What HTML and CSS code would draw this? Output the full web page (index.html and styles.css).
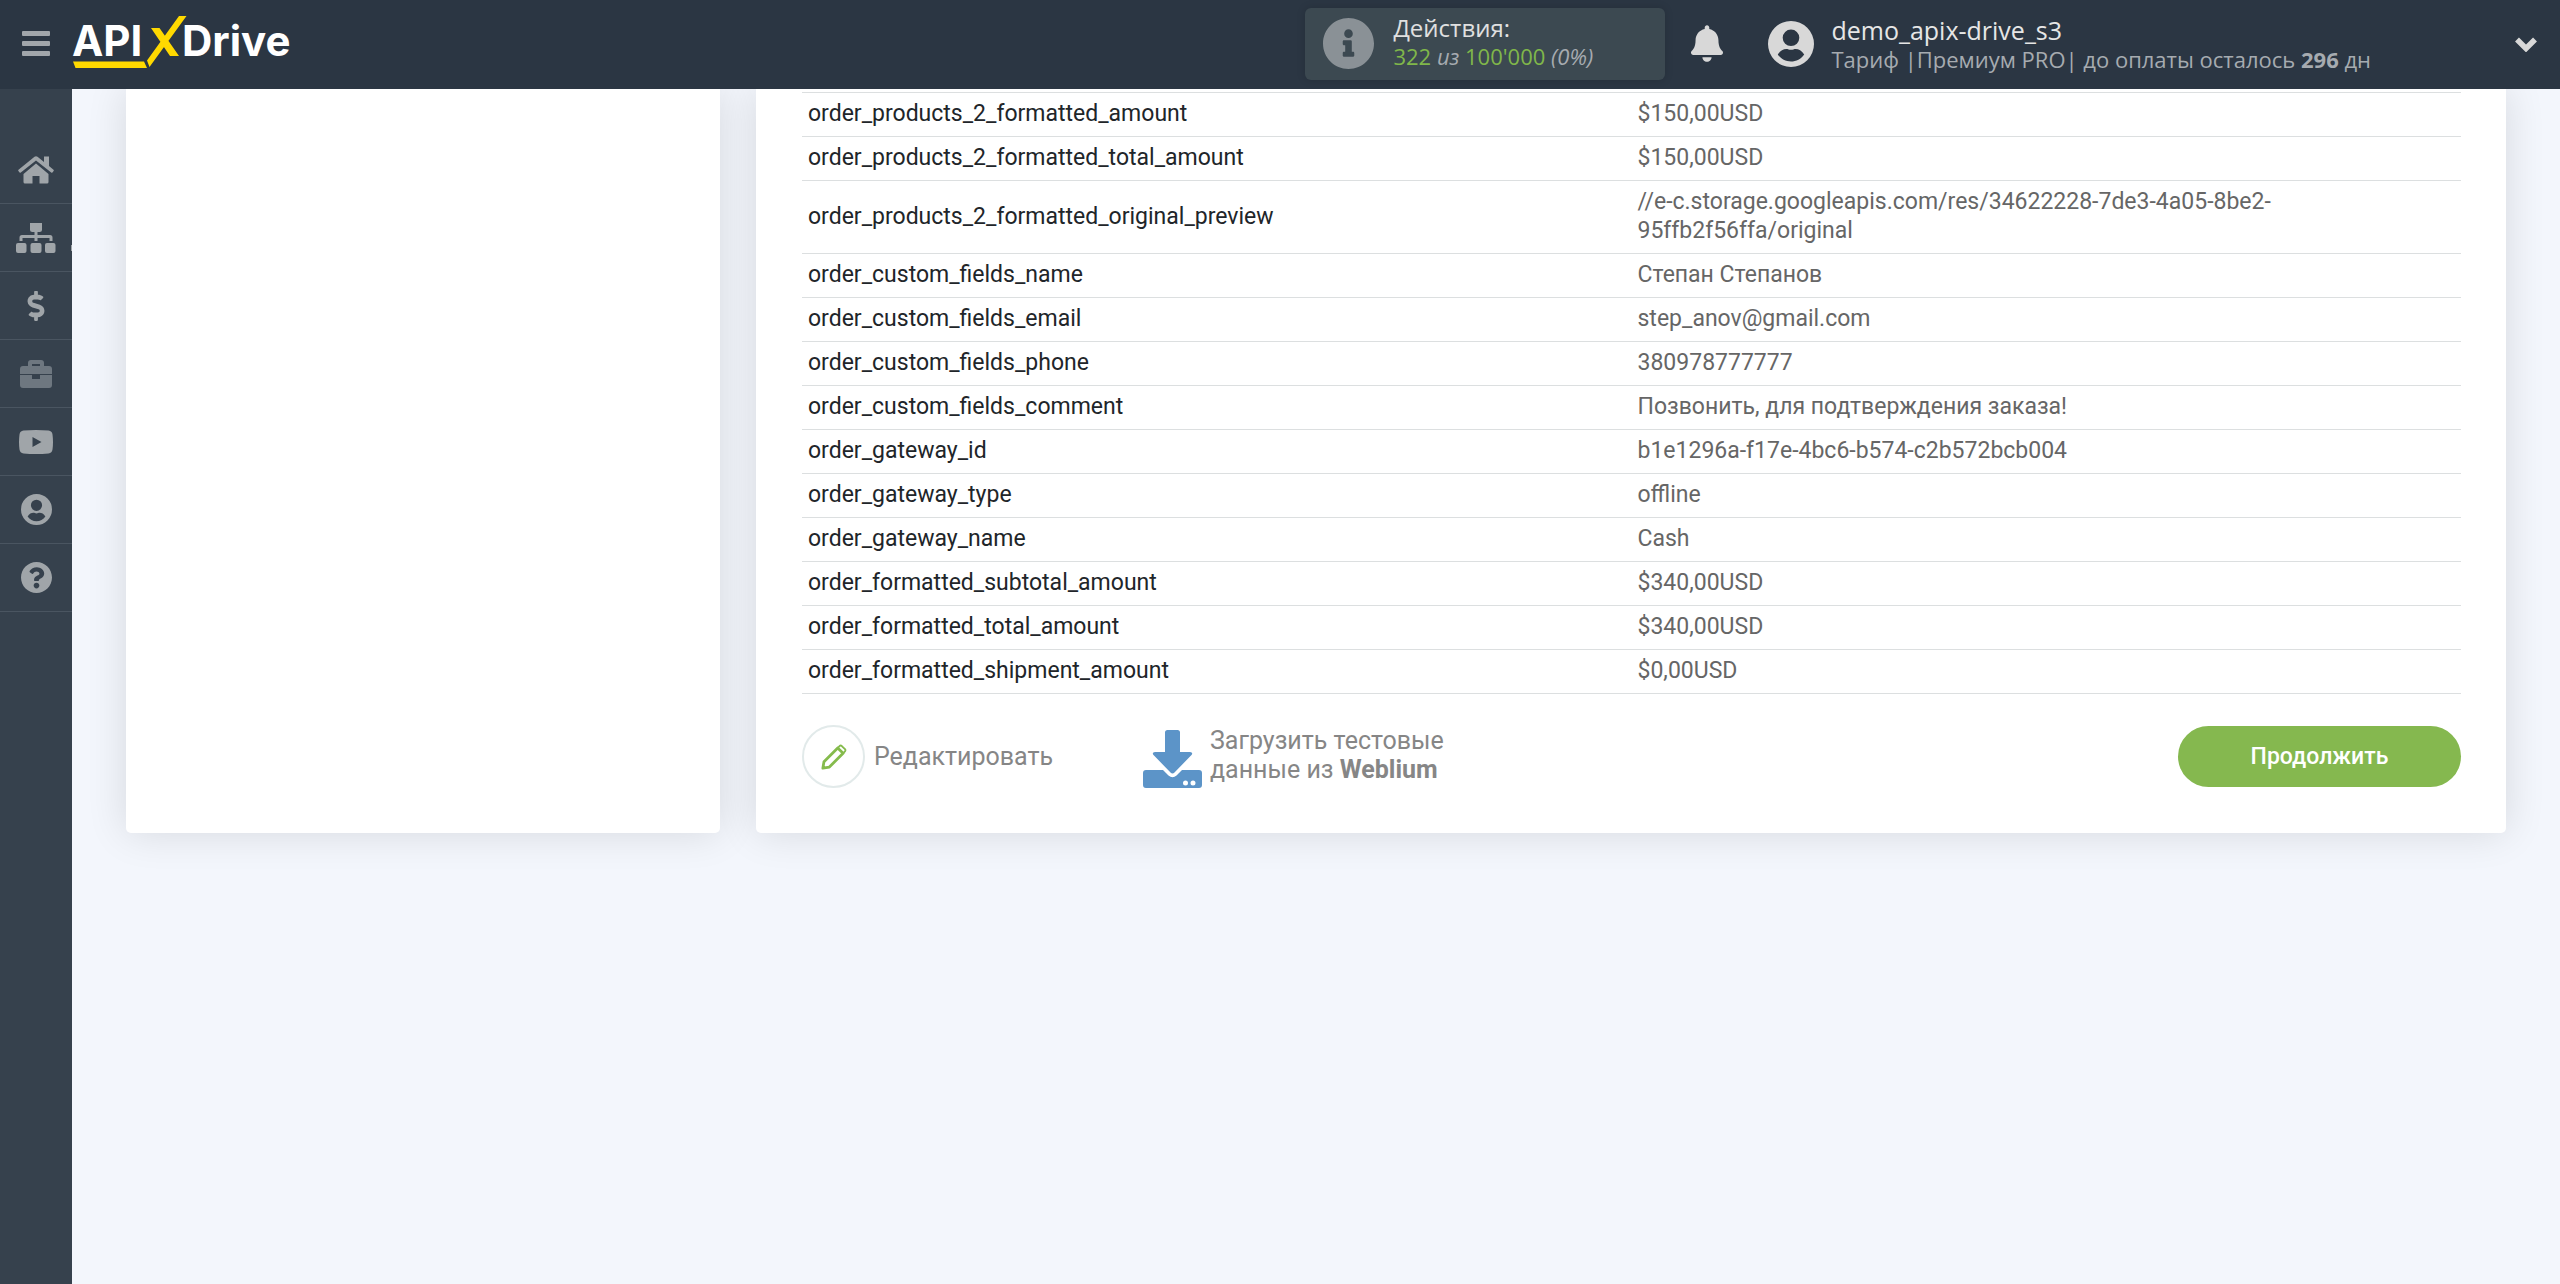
FILE: index.html
```html
<!DOCTYPE html>
<html lang="ru">
<head>
<meta charset="utf-8">
<meta name="viewport" content="width=device-width, initial-scale=1">
<title>APIXDrive</title>
<link rel="stylesheet" href="styles.css">
</head>
<body>
<svg class="defs" aria-hidden="true">
  <symbol id="user" viewBox="0 0 46 46">
    <path fill-rule="evenodd" d="M23 0a23 23 0 1 1 0 46a23 23 0 0 1 0-46zM23 8.500a8.300 8.300 0 1 0 0 16.600a8.300 8.300 0 0 0 0-16.600zM9.800 33.500c3 4.500 8 7 13.200 7s10.200-2.500 13.200-7c-2.500-4-5.500-5.500-8.500-5.500-1.700 0-2.700.800-4.700.800s-3-.800-4.700-.800c-3 0-6 1.500-8.500 5.500z"/>
  </symbol>
</svg>
<header class="topbar">
  <button class="menu-button" type="button" aria-label="Меню"><span></span><span></span><span></span></button>
  <a class="logo" href="#" aria-label="APIXDrive">
    <svg width="222" height="56" viewBox="72 14 222 56">
      <g class="logo-text"><text x="72" y="56">API</text><text x="182" y="56">Drive</text></g>
      <path fill="#ffd900" d="M151 28h8.500l19.500 28h-9zM179 16h7.500L149.500 67l-2.500-6.500zM73 61.500h71l3 6.500H75.500z"/>
    </svg>
  </a>
  <section class="actions">
    <svg class="info-icon" viewBox="8 8 496 496" aria-hidden="true"><path d="M256 8C119.043 8 8 119.083 8 256c0 136.997 111.043 248 248 248s248-111.003 248-248C504 119.083 392.957 8 256 8zm0 110c23.196 0 42 18.804 42 42s-18.804 42-42 42-42-18.804-42-42 18.804-42 42-42zm56 254c0 6.627-5.373 12-12 12h-88c-6.627 0-12-5.373-12-12v-24c0-6.627 5.373-12 12-12h12v-64h-12c-6.627 0-12-5.373-12-12v-24c0-6.627 5.373-12 12-12h64c6.627 0 12 5.373 12 12v100h12c6.627 0 12 5.373 12 12v24z"/></svg>
    <div class="actions-text">
      <div class="actions-title">Действия:</div>
      <div class="actions-count"><b>322</b> <i>из</i> <b>100'000</b> <i>(0%)</i></div>
    </div>
  </section>
  <button class="bell" type="button" aria-label="Уведомления">
    <svg width="32" height="37" viewBox="0 0 448 512"><path d="M224 512c35.320 0 63.970-28.650 63.970-64H160.030c0 35.350 28.650 64 63.970 64zm215.390-149.710c-19.320-20.760-55.470-51.990-55.470-154.290 0-77.700-54.480-139.900-127.940-155.160V32c0-17.670-14.320-32-31.980-32s-31.980 14.330-31.980 32v20.840C118.560 68.100 64.080 130.300 64.080 208c0 102.300-36.150 133.530-55.470 154.290-6 6.450-8.660 14.160-8.610 21.710.11 16.400 12.980 32 32.100 32h383.800c19.120 0 32-15.600 32.100-32 .05-7.550-2.610-15.270-8.610-21.710z"/></svg>
  </button>
  <section class="account">
    <svg class="avatar" aria-hidden="true"><use href="#user"/></svg>
    <div class="account-text">
      <div class="account-name">demo_apix-drive_s3</div>
      <div class="account-plan">Тариф |Премиум PRO| до оплаты осталось <b>296</b> дн</div>
    </div>
  </section>
  <button class="expand" type="button" aria-label="Развернуть">
    <svg width="24" height="16" viewBox="0 0 24 16"><path d="M3 3.500l9 9 9-9" fill="none" stroke="#d8d8d8" stroke-width="5.500"/></svg>
  </button>
</header>
<div class="shell">
  <nav class="sidebar" aria-label="Разделы">
    <a href="#" aria-label="Главная"><svg width="36" height="28" viewBox="0 0 36 28"><path d="M18 7.500L30.500 18v8a1.500 1.500 0 0 1-1.500 1.500h-7.500v-7.500h-7v7.500H7A1.500 1.500 0 0 1 5.500 26v-8zM16.500.800q1.500-1.200 3 0L26 6V.500h5V10l4.500 3.800q.6.600.1 1.200l-1.200 1.500q-.6.600-1.200.1L18 4.500 2.800 16.600q-.6.500-1.200-.1L.400 15q-.5-.6.100-1.200z"/></svg></a>
    <a href="#" aria-label="Связи" class="current"><svg width="40" height="30" viewBox="0 0 40 30"><path d="M14 0h12v6.500a2.500 2.500 0 0 1-2.500 2.500h-2v3H34a2.500 2.500 0 0 1 2.500 2.500V18h-3v-3h-12v3h-3v-3h-12v3h-3v-3.500A2.500 2.500 0 0 1 6 12h12.500V9h-2A2.500 2.500 0 0 1 14 6.500z"/><rect y="20" width="10.500" height="10" rx="2"/><rect x="14.500" y="20" width="11" height="10" rx="2"/><rect x="29" y="20" width="10.500" height="10" rx="2"/></svg></a>
    <a href="#" aria-label="Оплата"><svg width="18" height="30" viewBox="0 0 288 512"><path d="M209.200 233.400l-108-31.600C88.700 198.200 80 186.500 80 173.500c0-16.300 13.200-29.500 29.500-29.500h66.300c12.200 0 24.200 3.700 34.200 10.500 6.100 4.100 14.300 3.100 19.500-2l34.800-34c7.100-6.900 6.100-18.400-1.800-24.500C238 74.800 207.400 64.100 176 64V16c0-8.800-7.200-16-16-16h-32c-8.800 0-16 7.200-16 16v48h-2.500C45.800 64-5.400 118.700.5 183.600c4.200 46.100 39.400 83.600 83.800 96.600l102.500 30c12.500 3.700 21.200 15.300 21.200 28.300 0 16.300-13.200 29.500-29.500 29.500h-66.300C100 368 88 364.300 78 357.500c-6.100-4.100-14.300-3.100-19.500 2l-34.800 34c-7.100 6.900-6.100 18.400 1.800 24.500 24.500 19.200 55.100 29.900 86.500 30v48c0 8.800 7.200 16 16 16h32c8.800 0 16-7.200 16-16v-48.200c46.600-.9 90.300-28.600 105.700-72.700 21.500-61.600-14.600-124.800-72.500-141.700z"/></svg></a>
    <a href="#" aria-label="Проекты" class="muted"><svg width="32" height="28" viewBox="0 0 32 28"><path fill-rule="evenodd" d="M8 6V3a3 3 0 0 1 3-3h10a3 3 0 0 1 3 3v3h5a3 3 0 0 1 3 3v5H0V9a3 3 0 0 1 3-3zm4 0h8V4h-8zM0 15h12v4h8v-4h12v10a3 3 0 0 1-3 3H3a3 3 0 0 1-3-3z"/></svg></a>
    <a href="#" aria-label="Видео"><svg width="34" height="24" viewBox="0 0 34 24"><path fill-rule="evenodd" d="M4.500.600Q17-.500 29.500.600 33 1 33.500 4.500q1 7.500 0 15-.5 3.500-4 3.900-12.500 1.100-25 0-3.500-.4-4-3.900-1-7.500 0-15Q1 1 4.500.600zM13.500 7v10l9-5z"/></svg></a>
    <a href="#" aria-label="Профиль"><svg width="31" height="31"><use href="#user"/></svg></a>
    <a href="#" aria-label="Помощь"><svg width="31" height="31" viewBox="8 8 496 496"><path d="M504 256c0 136.997-111.043 248-248 248S8 392.997 8 256C8 119.083 119.043 8 256 8s248 111.083 248 248zM262.655 90c-54.497 0-89.255 22.957-116.549 63.758-3.536 5.286-2.353 12.415 2.715 16.258l34.699 26.310c5.205 3.947 12.621 3.008 16.665-2.122 17.864-22.658 30.113-35.797 57.303-35.797 20.429 0 45.698 13.148 45.698 32.958 0 14.976-12.363 22.667-32.534 33.976C247.128 238.528 216 254.941 216 296v4c0 6.627 5.373 12 12 12h56c6.627 0 12-5.373 12-12v-1.333c0-28.462 83.186-29.647 83.186-106.667 0-58.002-60.165-102-116.531-102zM256 338c-25.365 0-46 20.635-46 46 0 25.364 20.635 46 46 46s46-20.636 46-46c0-25.365-20.635-46-46-46z"/></svg></a>
  </nav>
  <main class="content">
    <aside class="card"></aside>
    <section class="card card-main">
      <table class="fields">
        <tbody>
          <tr><th scope="row">order_products_2_formatted_amount</th><td>$150,00USD</td></tr>
          <tr><th scope="row">order_products_2_formatted_total_amount</th><td>$150,00USD</td></tr>
          <tr><th scope="row">order_products_2_formatted_original_preview</th><td>//e-c.storage.googleapis.com/res/34622228-7de3-4a05-8be2-<br>95ffb2f56ffa/original</td></tr>
          <tr><th scope="row">order_custom_fields_name</th><td>Степан Степанов</td></tr>
          <tr><th scope="row">order_custom_fields_email</th><td>step_anov@gmail.com</td></tr>
          <tr><th scope="row">order_custom_fields_phone</th><td>380978777777</td></tr>
          <tr><th scope="row">order_custom_fields_comment</th><td>Позвонить, для подтверждения заказа!</td></tr>
          <tr><th scope="row">order_gateway_id</th><td>b1e1296a-f17e-4bc6-b574-c2b572bcb004</td></tr>
          <tr><th scope="row">order_gateway_type</th><td>offline</td></tr>
          <tr><th scope="row">order_gateway_name</th><td>Cash</td></tr>
          <tr><th scope="row">order_formatted_subtotal_amount</th><td>$340,00USD</td></tr>
          <tr><th scope="row">order_formatted_total_amount</th><td>$340,00USD</td></tr>
          <tr><th scope="row">order_formatted_shipment_amount</th><td>$0,00USD</td></tr>
        </tbody>
      </table>
      <div class="footer">
        <a class="edit" href="#">
          <span class="edit-ring"><svg width="26" height="26" viewBox="0 0 28 28" fill="none" stroke="#85bb4c" stroke-width="3" stroke-linejoin="round"><path d="M2 26l1.200-7L18 4.200l5.800 5.800L9 24.800z"/><path d="M18 4.200l2-2q1.200-1 2.400 0l3.400 3.400q1 1.200 0 2.400l-2 2" stroke-width="2"/></svg></span>
          Редактировать
        </a>
        <a class="load" href="#">
          <svg width="59" height="58" viewBox="0 0 59 58" fill="#5c94c8" aria-hidden="true"><path d="M24.500 0h10a2.500 2.500 0 0 1 2.500 2.500V22H47q3.500.500 1.500 3L31.500 42.500q-2 2-4 0L10.500 25q-2-2.500 1.500-3h10V2.500A2.500 2.500 0 0 1 24.500 0z"/><path fill-rule="evenodd" d="M3 40h17l5.500 5.500q4 3.500 8 0L39 40h17a3 3 0 0 1 3 3v12a3 3 0 0 1-3 3H3a3 3 0 0 1-3-3V43a3 3 0 0 1 3-3zM42.500 50.500a2.500 2.500 0 1 0 0 5 2.500 2.500 0 0 0 0-5zm7.500 0a2.500 2.500 0 1 0 0 5 2.500 2.500 0 0 0 0-5z"/></svg>
          <span>Загрузить тестовые<br>данные из <b>Weblium</b></span>
        </a>
        <button class="continue" type="button">Продолжить</button>
      </div>
    </section>
  </main>
</div>
</body>
</html>
```
FILE: styles.css
```css
* { box-sizing: border-box; }

body {
  margin: 0;
  min-height: 100vh;
  display: flex;
  flex-direction: column;
  background: #f3f6fc;
  font-family: Roboto, "Liberation Sans", sans-serif;
  font-size: 23px;
  line-height: 29px;
  color: #666;
}

a { color: inherit; text-decoration: none; }
button { border: 0; padding: 0; background: none; font: inherit; color: inherit; cursor: pointer; }
svg { display: block; flex: none; }
.defs { position: absolute; width: 0; height: 0; }

/* Top bar */
.topbar {
  display: flex;
  align-items: center;
  height: 89px;
  padding: 0 22px 2px;
  background: #2b3643;
  color: #a6abb0;
  font-family: "Open Sans", "Noto Sans", sans-serif;
  font-size: 22px;
  fill: #d8d8d8;
}
.menu-button { display: flex; flex-direction: column; gap: 5px; width: 28px; }
.menu-button span { height: 5px; border-radius: 1px; background: #a1a6ab; }
.logo { margin: 0 auto 4px 22px; }
.logo-text { fill: #fff; font: 700 42px Inter, sans-serif; }
.actions {
  display: flex;
  align-items: center;
  gap: 19px;
  width: 360px;
  height: 72px;
  padding: 0 18px;
  border-radius: 6px;
  background: #3c4951;
  box-shadow: 0 0 8px rgba(0, 0, 0, .15);
}
.info-icon { width: 51px; height: 51px; fill: #8a9196; }
.actions-text { padding-bottom: 4px; }
.actions-title { color: #e0e0e0; font-size: 24px; }
.actions-count b { color: #80b74a; font-weight: 400; }
.bell { margin-left: 26px; }
.account { display: flex; align-items: center; gap: 17px; margin-left: 45px; }
.avatar { width: 46px; height: 46px; }
.account-text { padding-top: 3px; }
.account-name { color: #e6e6e6; font-size: 25px; }
.account-plan { white-space: nowrap; }
.expand { margin-left: 143px; }

/* Side navigation */
.shell { display: flex; flex: 1; }
.sidebar { width: 72px; flex: none; padding-top: 47px; background: #36414d; fill: #a0a5a9; }
.sidebar a {
  position: relative;
  display: flex;
  align-items: center;
  justify-content: center;
  height: 68px;
  border-bottom: 1px solid #4a5561;
}
.sidebar .muted { fill: #6e7780; }
.sidebar .current::after {
  content: "";
  position: absolute;
  right: 0;
  bottom: 20px;
  width: 1px;
  height: 6px;
  background: #a0a5a9;
}

/* Content */
.content {
  flex: 1;
  display: grid;
  grid-template-columns: 594fr 1750fr;
  gap: 36px;
  align-items: stretch;
  align-content: start;
  padding: 0 54px;
  overflow: hidden;
}
.card {
  border-radius: 0 0 5px 5px;
  background: #fff;
  box-shadow: 0 0 40px rgba(0, 0, 0, .12);
}
.card-main { padding: 3px 45px 45px 46px; }

.fields { width: 100%; table-layout: fixed; border-collapse: collapse; }
.fields th, .fields td {
  width: 50%;
  padding: 6px 6px 8px;
  border-top: 1px solid #dcdfe0;
  border-bottom: 1px solid #dcdfe0;
  text-align: left;
  font-weight: 400;
}
.fields th { color: #212529; }

.footer { display: flex; align-items: center; padding-top: 31px; font-size: 25px; color: #868686; }
.edit { display: flex; align-items: center; gap: 9px; width: 341px; }
.edit-ring {
  display: flex;
  align-items: center;
  justify-content: center;
  width: 63px;
  height: 63px;
  border: 2px solid #e2eaea;
  border-radius: 50%;
}
.load { display: flex; align-items: flex-end; gap: 8px; }
.load span { padding-bottom: 4px; }
.continue {
  width: 283px;
  height: 61px;
  margin-left: auto;
  border-radius: 31px;
  background: #85b84f;
  color: #fff;
  font-size: 23px;
  font-weight: 500;
}
```
